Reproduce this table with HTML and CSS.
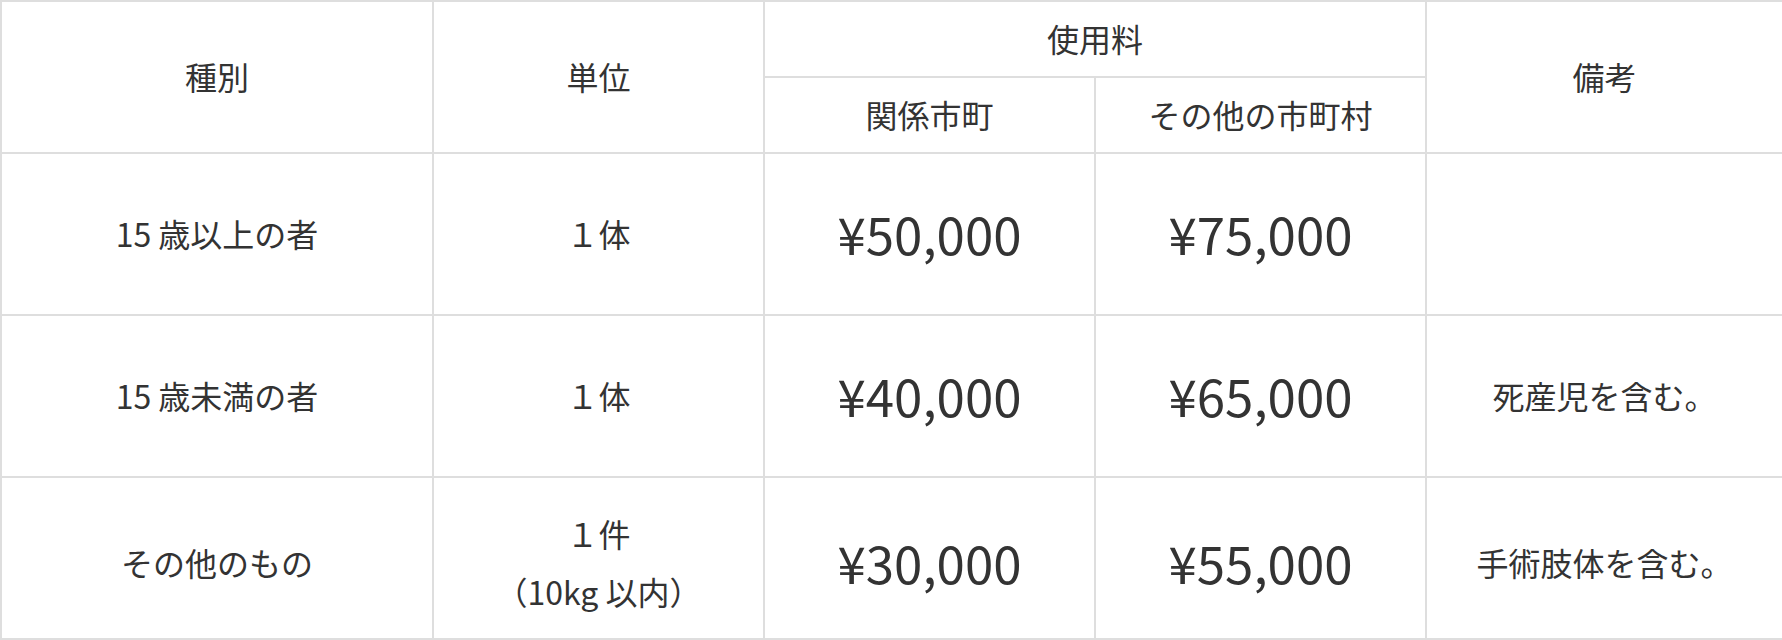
FILE: index.html
```html
<!DOCTYPE html>
<html lang="ja">
<head>
<meta charset="utf-8">
<link rel="stylesheet" href="styles.css">
</head>
<body>
<table class="fee-table">
  <colgroup>
    <col class="c1"><col class="c2"><col class="c3"><col class="c4"><col class="c5">
  </colgroup>
  <thead>
    <tr class="hrow">
      <th rowspan="2">種別</th>
      <th rowspan="2">単位</th>
      <th colspan="2">使用料</th>
      <th rowspan="2">備考</th>
    </tr>
    <tr class="hrow">
      <th>関係市町</th>
      <th>その他の市町村</th>
    </tr>
  </thead>
  <tbody>
    <tr class="brow">
      <td>15 歳以上の者</td>
      <td>１体</td>
      <td class="price">¥50,000</td>
      <td class="price">¥75,000</td>
      <td></td>
    </tr>
    <tr class="brow">
      <td>15 歳未満の者</td>
      <td>１体</td>
      <td class="price">¥40,000</td>
      <td class="price">¥65,000</td>
      <td>死産児を含む。</td>
    </tr>
    <tr class="brow brow-last">
      <td>その他のもの</td>
      <td>１件<br>（10kg 以内）</td>
      <td class="price">¥30,000</td>
      <td class="price">¥55,000</td>
      <td>手術肢体を含む。</td>
    </tr>
  </tbody>
</table>
</body>
</html>
```
FILE: styles.css
```css
html, body {
  margin: 0;
  padding: 0;
  background: #fff;
}
.fee-table {
  width: 1782px;
  border-collapse: collapse;
  table-layout: fixed;
  font-family: "Noto Sans CJK JP", "Noto Sans", sans-serif;
  color: #333;
  font-size: 32px;
  line-height: 1.8;
}
.c1 { width: 432px; }
.c2 { width: 331px; }
.c3 { width: 331px; }
.c4 { width: 331px; }
.c5 { width: 357px; }
.fee-table th,
.fee-table td {
  border: 2px solid #dedede;
  text-align: center;
  vertical-align: middle;
  font-weight: 400;
  padding: 0;
}
.hrow { height: 76px; }
.brow { height: 162px; }
.price {
  font-size: 51px;
  line-height: 1.4;
  padding-bottom: 15px;
}
.brow-last td {
  padding-top: 10px;
}
```
